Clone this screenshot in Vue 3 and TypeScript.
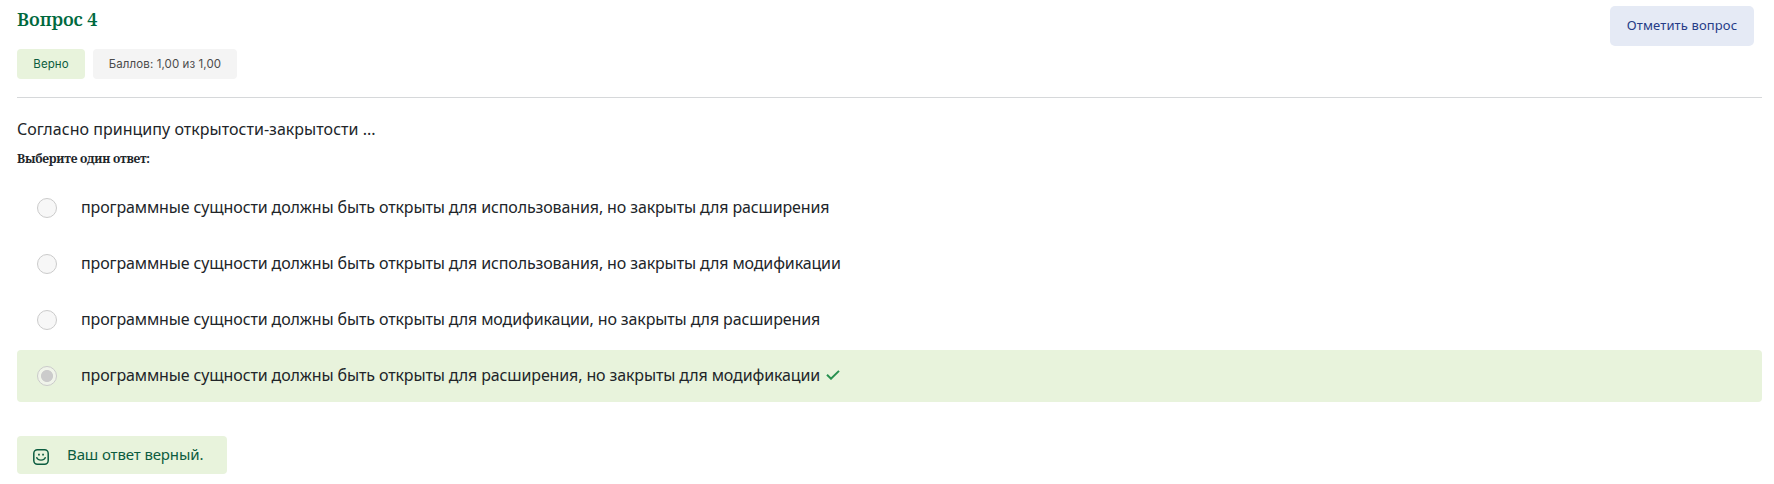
<script setup lang="ts">
interface Answer {
  text: string
  selected: boolean
}

const answers: Answer[] = [
  { text: 'программные сущности должны быть открыты для использования, но закрыты для расширения', selected: false },
  { text: 'программные сущности должны быть открыты для использования, но закрыты для модификации', selected: false },
  { text: 'программные сущности должны быть открыты для модификации, но закрыты для расширения', selected: false },
  { text: 'программные сущности должны быть открыты для расширения, но закрыты для модификации', selected: true },
]
</script>

<template>
  <main class="question">
    <header class="head">
      <div>
        <h3 class="title">Вопрос 4</h3>
        <div class="badges">
          <span class="badge correct">Верно</span>
          <span class="badge grade">Баллов: 1,00 из 1,00</span>
        </div>
      </div>
      <button class="flag" type="button">Отметить вопрос</button>
    </header>

    <p class="text">Согласно принципу открытости-закрытости ...</p>
    <h4 class="prompt">Выберите один ответ:</h4>

    <div class="answers">
      <div v-for="a in answers" :key="a.text" class="answer" :class="{ right: a.selected }">
        <span class="radio" :class="{ checked: a.selected }"></span>
        <span class="label">{{ a.text }}</span>
        <svg v-if="a.selected" class="check" width="14" height="10" viewBox="0 0 14 10" fill="none">
          <path d="M1 4.8 5 8.7 13 .9" stroke="#27904f" stroke-width="2" />
        </svg>
      </div>
    </div>

    <div class="feedback">
      <svg class="smile" width="16" height="16" viewBox="0 0 16 16" fill="none" stroke="#0c5c40">
        <rect x=".8" y=".8" width="14.4" height="14.4" rx="3.6" stroke-width="1.5" />
        <path d="M3.6 8.2c.8 3.9 8 3.9 8.8 0" stroke-width="1.4" />
        <path d="M5.1 5.6h1.7M9.2 5.6h1.7" stroke-width="1.6" />
      </svg>
      <span>Ваш ответ верный.</span>
    </div>
  </main>
</template>

<style>
body {
  background: #fff;
}
</style>

<style scoped>
.question {
  box-sizing: border-box;
  height: 484px;
  padding: 6px 12px 0 17px;
  font-family: "Noto Sans", "Open Sans", sans-serif;
  color: #212529;
}

.head {
  display: flex;
  justify-content: space-between;
  align-items: flex-start;
  box-sizing: border-box;
  height: 92px;
  padding-right: 8px;
  border-bottom: 1px solid #d6d8da;
}

.title {
  margin: 0;
  font: 600 18px/27px "Noto Serif", "Liberation Serif", serif;
  letter-spacing: -0.1px;
  color: #00693e;
}

.badges {
  display: flex;
  gap: 8px;
  margin-top: 16px;
}

.badge {
  box-sizing: border-box;
  height: 30px;
  border-radius: 4px;
  font-family: Inter, "Noto Sans", sans-serif;
  font-size: 11.5px;
  line-height: 30px;
  letter-spacing: 0.1px;
  text-align: center;
  white-space: nowrap;
}

.correct {
  width: 68px;
  background: #e8f3dc;
  color: #0c5c40;
}

.grade {
  width: 144px;
  background: #f4f4f4;
  color: #4b4b4b;
}

.flag {
  width: 144px;
  height: 40px;
  padding: 0 0 2px;
  border: 0;
  border-radius: 5px;
  background: #e5eaf5;
  color: #253c87;
  font: 13px "Noto Sans", sans-serif;
  letter-spacing: 0.12px;
}

.text {
  margin: 19px 0 0;
  font-size: 16px;
  line-height: 24px;
  letter-spacing: 0.03px;
}

.prompt {
  margin: 9px 0 0;
  font: 700 12px/18px "Noto Serif", "Liberation Serif", serif;
  letter-spacing: -0.25px;
}

.answers {
  display: flex;
  flex-direction: column;
  gap: 4px;
  margin-top: 14px;
}

.answer {
  display: flex;
  align-items: center;
  height: 52px;
  padding-left: 20px;
  border-radius: 4px;
}

.right {
  background: #e8f3dc;
}

.radio {
  box-sizing: border-box;
  width: 20px;
  height: 20px;
  margin-right: 24px;
  border: 1px solid #cbcbcb;
  border-radius: 50%;
  background: #f7f7f7;
}

.checked {
  background: radial-gradient(circle, #cbcbcb 5.6px, #f0f4ea 6.4px);
}

.label {
  padding-bottom: 2px;
  font-size: 16px;
  line-height: 24px;
  letter-spacing: -0.127px;
}

.check {
  margin: 0 0 2px 6px;
}

.feedback {
  display: flex;
  align-items: center;
  box-sizing: border-box;
  width: 210px;
  height: 38px;
  margin-top: 34px;
  padding-left: 16px;
  border-radius: 4px;
  background: #e8f3dc;
  color: #0c5c40;
  font-size: 15px;
  line-height: 20px;
  letter-spacing: -0.12px;
}

.feedback span {
  padding-bottom: 2px;
}

.smile {
  margin: 4px 18px 0 0;
}
</style>
